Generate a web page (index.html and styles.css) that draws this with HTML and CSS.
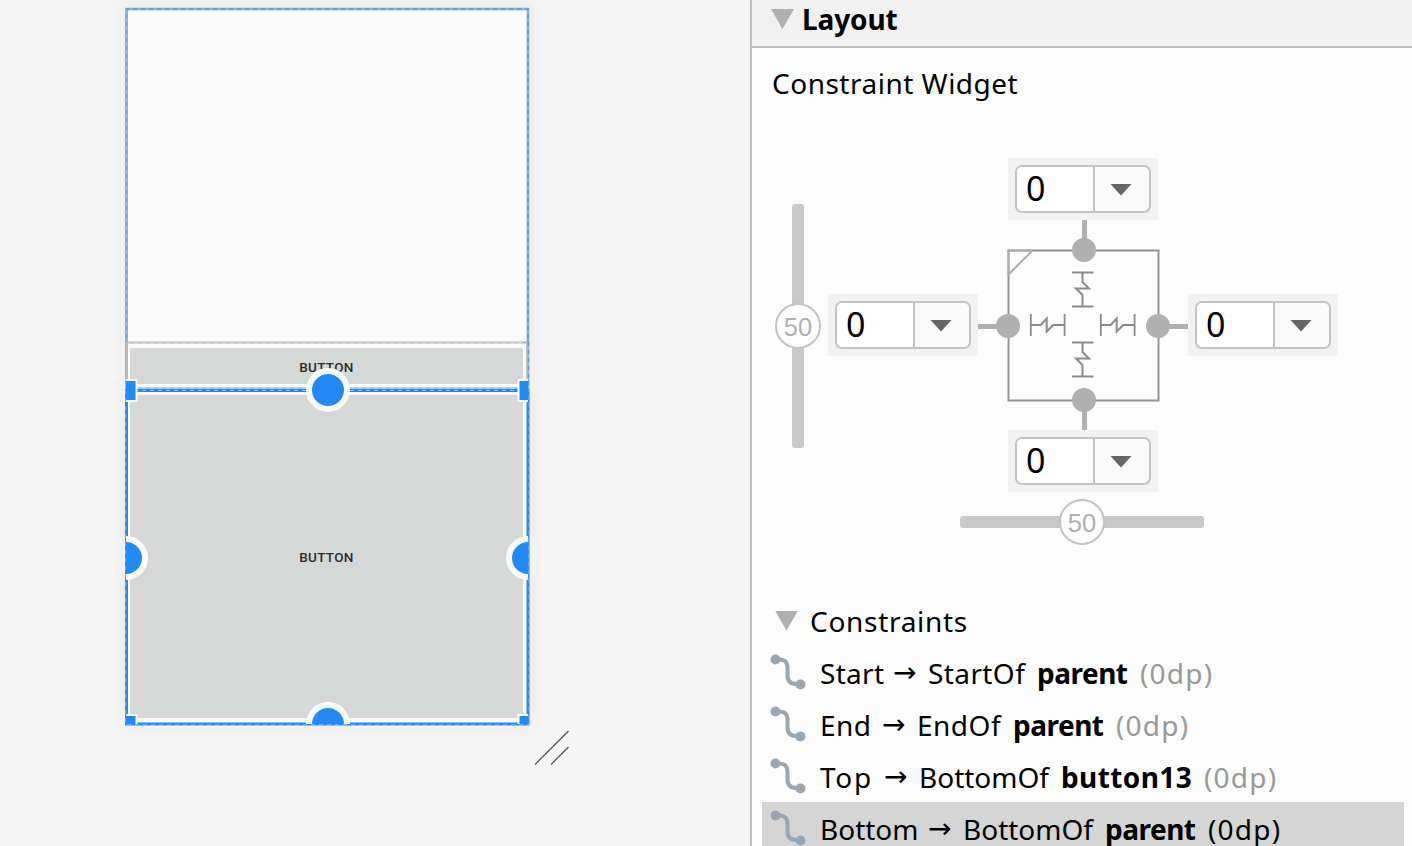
FILE: index.html
```html
<!DOCTYPE html>
<html lang="en">
<head>
<meta charset="utf-8">
<title>Layout editor</title>
<link rel="stylesheet" href="styles.css">
</head>
<body>
<svg width="0" height="0" class="defs">
  <symbol id="conn" viewBox="0 0 36 36"><path d="M6 5.500H9C15 5.500 17.500 8 17.500 14V21C17.500 27 20 30 26 30H30" fill="none" stroke="#9aa7b0" stroke-width="4"/><circle cx="5.500" cy="5.500" r="5" fill="#9aa7b0"/><circle cx="30.500" cy="30.500" r="5" fill="#9aa7b0"/></symbol>
  <symbol id="spring" viewBox="0 0 36 22"><path d="M1 0V22M35 0V22M1 11H11L17 4.500V17.500L23.500 11H35" fill="none" stroke="#8b8b8b" stroke-width="2"/></symbol>
</svg>
<div class="app">
  <main class="surface">
    <div class="device">
      <svg class="blueprint" width="405" height="719" viewBox="0 0 405 719">
        <defs><clipPath id="screen"><rect x="1" y="1" width="402" height="716"/></clipPath></defs>
        <rect width="404" height="718" fill="#fafafa"/>
        <rect x="5" y="341" width="393" height="36" rx="2" fill="#d6d8d7"/>
        <rect x="5" y="388" width="393" height="323" rx="2" fill="#d6d8d7"/>
        <text x="201.500" y="364.500" class="btn">BUTTON</text>
        <text x="201.500" y="555" class="btn">BUTTON</text>
        <path d="M1 335.500H403M1 381.300H403" stroke="#b9b9b9" stroke-width="2.200"/>
        <path d="M1 335.500H403M1 381H403" stroke="#d5d5d5" stroke-width="1" stroke-dasharray="4 4"/>
        <path d="M1.500 383V2H403V383" fill="none" stroke="#5a9fdb" stroke-width="2.500"/>
        <path d="M1.300 383V2H403V383" fill="none" stroke="#a4b9c8" stroke-width="1.300" stroke-dasharray="4 4"/>
        <path d="M1.500 335V383M402.500 335V383" stroke="#b9b9b9" stroke-width="2.500"/>
        <path d="M403.500 335V383" stroke="#5a9fdb" stroke-width="1.500" stroke-dasharray="4 4"/>
        <rect x="1.500" y="383.500" width="401.500" height="333.500" fill="none" stroke="#2389f7" stroke-width="3"/>
        <path d="M.75 383V717.750H404V383M1 383.500H403" fill="none" stroke="#8dbbe8" stroke-width="1" stroke-dasharray="4 4"/>
        <g clip-path="url(#screen)" fill="#2389f7" stroke="#fafafa">
          <g stroke-width="6"><circle cx="203" cy="383" r="19"/><circle cx="1" cy="551" r="19"/><circle cx="403" cy="551" r="19"/><circle cx="203" cy="717" r="19"/></g>
          <g stroke-width="2"><path d="M-9 373H11.500V394H-9ZM393.500 373H414V394H393.500ZM-9 708H11.500V727H-9ZM393.500 708H414V727H393.500Z"/></g>
        </g>
        <path d="M403.500 373V394M403.500 530V572" fill="none" stroke="#5a9fdb" stroke-width="1.300" stroke-dasharray="4 4"/>
      </svg>
    </div>
    <svg class="grip" width="36" height="36" viewBox="0 0 36 36"><path d="M1 34.500L34.500 1M17 34.500L34.500 17" stroke="#555" stroke-width="1.300"/></svg>
  </main>
  <aside class="panel">
    <header class="head"><i class="tri"></i><b class="title">Layout</b></header>
    <h2 class="sub">Constraint Widget</h2>
    <section class="widget">
      <div class="vslider"><span class="knob">50</span></div>
      <div class="combo north"><div class="box"><span class="val">0</span><span class="drop"><i></i></span></div></div>
      <div class="combo west"><div class="box"><span class="val">0</span><span class="drop"><i></i></span></div></div>
      <svg class="core" width="210" height="210" viewBox="0 0 210 210">
        <rect x="30.500" y="30.500" width="150" height="150" fill="none" stroke="#949494" stroke-width="2"/>
        <path d="M54.500 30.500H30.500V54.500L54.500 30.500" fill="none" stroke="#b0b0b0" stroke-width="2"/>
        <path d="M106.500 0V30M106.500 180V210M0 106.500H30M180 106.500H210" stroke="#b0b0b0" stroke-width="5"/>
        <g fill="#b0b0b0"><circle cx="106" cy="30" r="12"/><circle cx="106" cy="180" r="12"/><circle cx="30" cy="106" r="12"/><circle cx="180" cy="106" r="12"/></g>
        <use href="#spring" x="51.700" y="94" width="36" height="22"/>
        <use href="#spring" x="121.700" y="94" width="36" height="22"/>
        <g fill="none" stroke="#8b8b8b" stroke-width="2"><path d="M94 52.500H115.500M94 86.500H115.500M104.500 52.500V62L111 68.500H98L104.500 75V86.500"/><path d="M94 122.500H115.500M94 156.500H115.500M104.500 122.500V132L111 138.500H98L104.500 145V156.500"/></g>
      </svg>
      <div class="combo east"><div class="box"><span class="val">0</span><span class="drop"><i></i></span></div></div>
      <div class="combo south"><div class="box"><span class="val">0</span><span class="drop"><i></i></span></div></div>
      <div class="hslider"><span class="knob">50</span></div>
    </section>
    <div class="group"><i class="tri"></i><span>Constraints</span></div>
    <ul class="list">
      <li class="row"><svg width="36" height="36"><use href="#conn"/></svg><span class="w-start">Start</span><span class="arrow">→</span><span class="t-start">StartOf</span><b class="parent">parent</b><em>(0dp)</em></li>
      <li class="row"><svg width="36" height="36"><use href="#conn"/></svg><span class="w-end">End</span><span class="arrow">→</span><span class="t-end">EndOf</span><b class="parent">parent</b><em>(0dp)</em></li>
      <li class="row"><svg width="36" height="36"><use href="#conn"/></svg><span class="w-top">Top</span><span class="arrow">→</span><span class="t-bottom">BottomOf</span><b class="button">button13</b><em>(0dp)</em></li>
      <li class="row selected"><svg width="36" height="36"><use href="#conn"/></svg><span class="w-bottom">Bottom</span><span class="arrow">→</span><span class="t-bottom">BottomOf</span><b class="parent">parent</b><em>(0dp)</em></li>
    </ul>
  </aside>
</div>
</body>
</html>
```

FILE: styles.css
```css
* { box-sizing: border-box; }
body { margin: 0; overflow: hidden; font-family: "Noto Sans", "Open Sans", sans-serif; font-size: 28px; color: #000; }
.defs { display: block; }
.app { display: flex; width: 1412px; height: 846px; overflow: hidden; }
.surface { width: 750px; background: #f5f5f5; padding: 7px 0 0 125px; }
.device { width: 405px; height: 719px; box-shadow: 0 0 15px 4px rgba(0,0,0,.035); }
.blueprint { display: block; }
.btn { font: 500 13.5px Roboto, sans-serif; fill: #2c2c2c; text-anchor: middle; letter-spacing: .3px; }
.grip { display: block; margin: 4px 0 0 409px; }
.panel { width: 662px; border-left: 2px solid #c0c0c0; background: #fcfcfc; flex: none; }
.head { display: flex; height: 48px; background: #f1f1f1; border-bottom: 2px solid #c0c0c0; padding-left: 19px; }
.tri { flex: none; width: 23px; height: 20px; background: #b0b0b0; clip-path: polygon(0 0, 100% 0, 50% 100%); }
.head .tri { margin-top: 9px; }
.title { margin-left: 8px; line-height: 38px; letter-spacing: -.1px; }
.sub { margin: 17px 0 0 20px; font-size: 28px; font-weight: 400; line-height: 36px; letter-spacing: .5px; }
.widget { display: grid; margin: 57px 0 0 24px; grid-template-rows: 62px 30px 150px 30px 62px 8px 45px; grid-template-columns: 52px 150px 30px 150px 30px 150px; }
.combo { width: 150px; height: 62px; padding: 7px; background: #f2f2f2; }
.north { grid-area: 1 / 4; }
.west { grid-area: 3 / 2; align-self: center; }
.east { grid-area: 3 / 6; align-self: center; }
.south { grid-area: 5 / 4; }
.core { grid-area: 2 / 3 / 5 / 6; display: block; }
.box { display: flex; width: 136px; height: 48px; border: 2px solid #c3c3c3; border-radius: 7px; background: #fafafa; overflow: hidden; }
.val { width: 78px; border-right: 2px solid #c3c3c3; background: #fff; padding-left: 9px; font-size: 34px; line-height: 42px; }
.drop { flex: 1; display: flex; align-items: center; justify-content: center; padding: 1px 2px 0 0; }
.drop i { width: 22px; height: 12px; background: #666; clip-path: polygon(0 0, 100% 0, 50% 100%); }
.vslider, .hslider { display: grid; place-items: center; }
.vslider::before, .hslider::before { content: ""; grid-area: 1 / 1; border-radius: 3px; background: #c9c9c9; }
.vslider { grid-area: 1 / 1 / 6 / 2; align-self: center; width: 44px; height: 244px; margin: 2px 0 0 -1px; }
.vslider::before { width: 12px; height: 244px; }
.hslider { grid-area: 7 / 3 / 8 / 6; justify-self: center; width: 244px; height: 44px; margin: -1px 0 0 -2px; }
.hslider::before { width: 244px; height: 12px; }
.knob { grid-area: 1 / 1; z-index: 1; width: 46px; height: 46px; border: 2px solid #c3c3c3; border-radius: 50%; background: #fff; color: #b0b0b0; font: 25.5px/44px "Liberation Sans", sans-serif; text-align: center; }
.group { display: flex; align-items: center; height: 40px; margin: 56px 0 0 23px; letter-spacing: .7px; }
.group .tri { margin-top: -1px; }
.group span { margin-left: 12px; }
.list { list-style: none; margin: 5px 8px 0 10px; padding: 0; }
.row { display: flex; height: 52px; padding-left: 8px; line-height: 54px; white-space: nowrap; }
.row svg { flex: none; margin: 8px 14px 0 0; }
.row span, .row b { flex: none; }
.row em { margin-left: 1px; font-style: normal; color: #999; letter-spacing: 1.2px; }
.selected { background: #d5d5d5; }
.selected em { color: #000; }
.w-start { width: 73px; letter-spacing: .3px; }
.w-end { width: 62px; letter-spacing: .5px; }
.w-top { width: 64px; letter-spacing: 1.7px; }
.w-bottom { width: 108px; }
.row .arrow { width: 35px; font-family: "DejaVu Sans", sans-serif; font-size: 28px; }
.t-start { width: 109px; letter-spacing: .4px; }
.t-end { width: 96px; letter-spacing: .5px; }
.t-bottom { width: 142px; }
.parent { width: 102px; letter-spacing: -.5px; }
.button { width: 142px; letter-spacing: .4px; }
```
